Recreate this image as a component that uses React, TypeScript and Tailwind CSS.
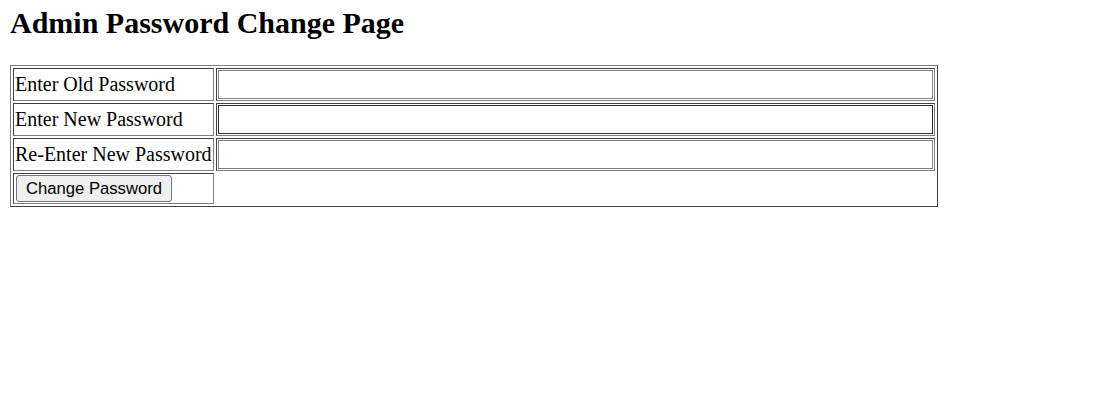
export default function App() {
  const rows = [
    { label: "Enter Old Password", hover: false },
    { label: "Enter New Password", hover: true },
    { label: "Re-Enter New Password", hover: false },
  ];
  const cell =
    "border border-t-[#404040] border-l-[#404040] border-r-[#808080] border-b-[#808080] p-px align-middle whitespace-nowrap";
  return (
    <div className="min-h-[413px] bg-white px-[10px] pt-[6px] text-black">
      <h2 className="m-0 font-['Liberation_Serif',serif] text-[30px] font-bold leading-[34px]">
        Admin Password Change Page
      </h2>
      <table className="mt-[25px] w-[928px] border-separate border-spacing-[2px] border border-t-[#808080] border-l-[#808080] border-r-[#404040] border-b-[#404040] font-['Liberation_Serif',serif] text-[20px] leading-[23px]">
        <tbody>
          {rows.map((r) => (
            <tr key={r.label}>
              <td className={cell + " w-[199px]"}>{r.label}</td>
              <td className={cell}>
                <input
                  type="password"
                  className={
                    "block h-[29px] w-full bg-white border " +
                    (r.hover ? "border-[#303030]" : "border-[#808080]")
                  }
                />
              </td>
            </tr>
          ))}
          <tr>
            <td className={cell}>
              <button className="ml-px block h-[27px] w-[156px] rounded-[3px] border border-[#767676] bg-[#efefef] font-['Liberation_Sans',Arial,sans-serif] text-[16.67px] leading-[19px] text-black">
                Change Password
              </button>
            </td>
          </tr>
        </tbody>
      </table>
    </div>
  );
}
